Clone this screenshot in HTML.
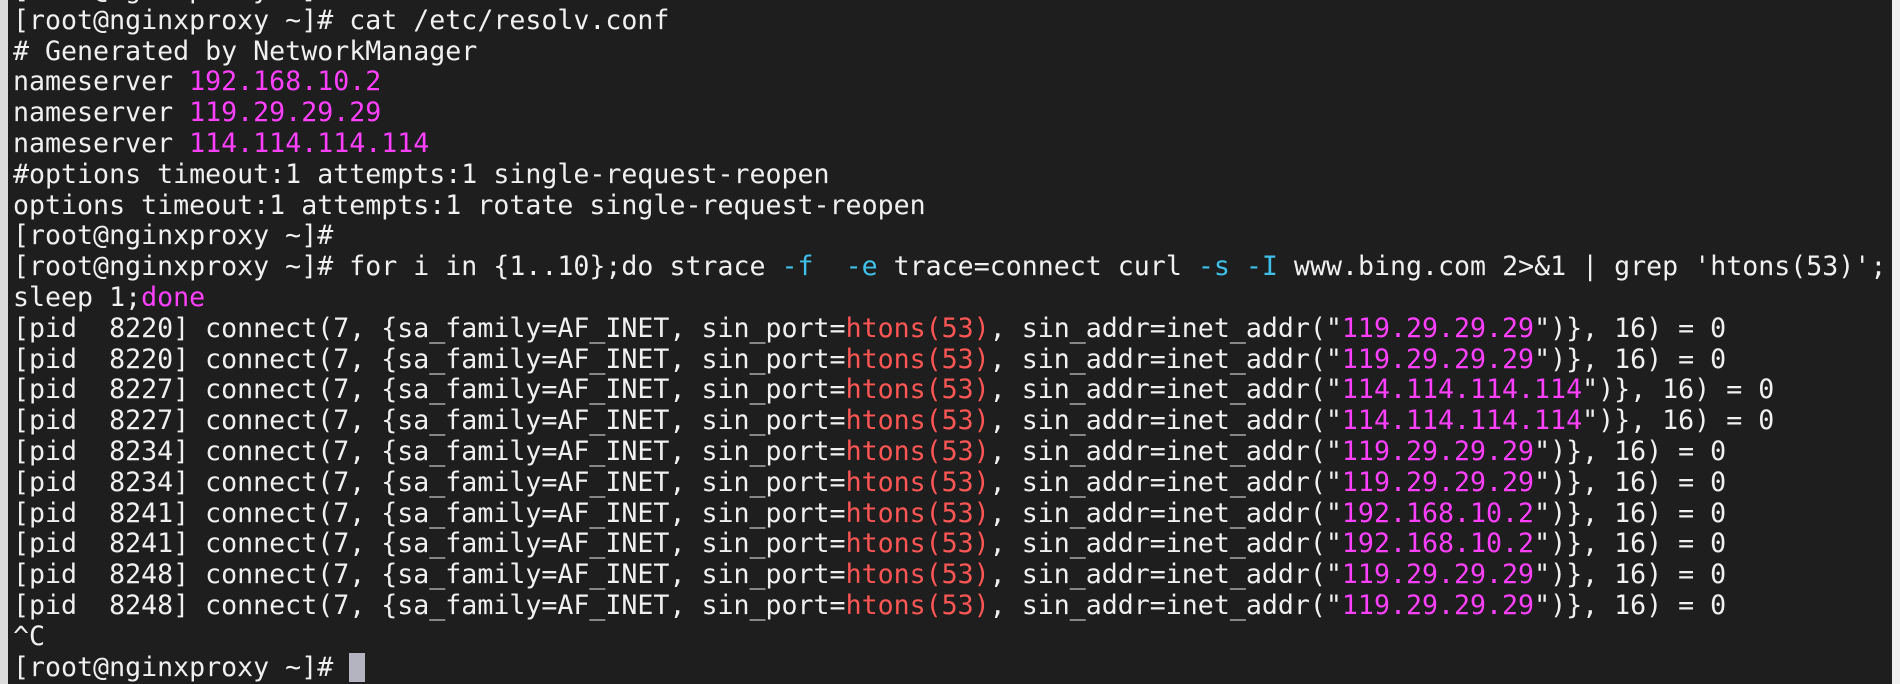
<!DOCTYPE html>
<html><head><meta charset="utf-8"><style>
html,body{margin:0;padding:0;width:1900px;height:684px;overflow:hidden;background:#eeeeee;}
#t{position:absolute;left:8px;top:0;width:1884px;height:684px;background:#1e1e1e;overflow:hidden;}
#l{position:absolute;left:0;top:0;width:8px;height:684px;background:#dcdcdc;}
pre{position:absolute;left:5px;top:-25px;margin:0;font-family:"DejaVu Sans Mono","Liberation Mono",monospace;font-size:26.6px;line-height:30.8px;color:#f0f0f0;white-space:pre;}
.m{color:#ff40ff}.c{color:#40bfe8}.r{color:#ff5555}
.cur{display:inline-block;width:16px;height:29px;background:#b4b4c0;vertical-align:-6px;}
</style></head><body><div id="l"></div><div id="t"><pre>[root@nginxproxy ~]#
[root@nginxproxy ~]# cat /etc/resolv.conf
# Generated by NetworkManager
nameserver <span class="m">192.168.10.2</span>
nameserver <span class="m">119.29.29.29</span>
nameserver <span class="m">114.114.114.114</span>
#options timeout:1 attempts:1 single-request-reopen
options timeout:1 attempts:1 rotate single-request-reopen
[root@nginxproxy ~]#
[root@nginxproxy ~]# for i in {1..10};do strace <span class="c">-f</span>  <span class="c">-e</span> trace=connect curl <span class="c">-s</span> <span class="c">-I</span> www.bing.com 2>&amp;1 | grep 'htons(53)';
sleep 1;<span class="m">done</span>
[pid  8220] connect(7, {sa_family=AF_INET, sin_port=<span class="r">htons(53)</span>, sin_addr=inet_addr("<span class="m">119.29.29.29</span>")}, 16) = 0
[pid  8220] connect(7, {sa_family=AF_INET, sin_port=<span class="r">htons(53)</span>, sin_addr=inet_addr("<span class="m">119.29.29.29</span>")}, 16) = 0
[pid  8227] connect(7, {sa_family=AF_INET, sin_port=<span class="r">htons(53)</span>, sin_addr=inet_addr("<span class="m">114.114.114.114</span>")}, 16) = 0
[pid  8227] connect(7, {sa_family=AF_INET, sin_port=<span class="r">htons(53)</span>, sin_addr=inet_addr("<span class="m">114.114.114.114</span>")}, 16) = 0
[pid  8234] connect(7, {sa_family=AF_INET, sin_port=<span class="r">htons(53)</span>, sin_addr=inet_addr("<span class="m">119.29.29.29</span>")}, 16) = 0
[pid  8234] connect(7, {sa_family=AF_INET, sin_port=<span class="r">htons(53)</span>, sin_addr=inet_addr("<span class="m">119.29.29.29</span>")}, 16) = 0
[pid  8241] connect(7, {sa_family=AF_INET, sin_port=<span class="r">htons(53)</span>, sin_addr=inet_addr("<span class="m">192.168.10.2</span>")}, 16) = 0
[pid  8241] connect(7, {sa_family=AF_INET, sin_port=<span class="r">htons(53)</span>, sin_addr=inet_addr("<span class="m">192.168.10.2</span>")}, 16) = 0
[pid  8248] connect(7, {sa_family=AF_INET, sin_port=<span class="r">htons(53)</span>, sin_addr=inet_addr("<span class="m">119.29.29.29</span>")}, 16) = 0
[pid  8248] connect(7, {sa_family=AF_INET, sin_port=<span class="r">htons(53)</span>, sin_addr=inet_addr("<span class="m">119.29.29.29</span>")}, 16) = 0
^C
[root@nginxproxy ~]# <span class="cur"></span></pre></div></body></html>
